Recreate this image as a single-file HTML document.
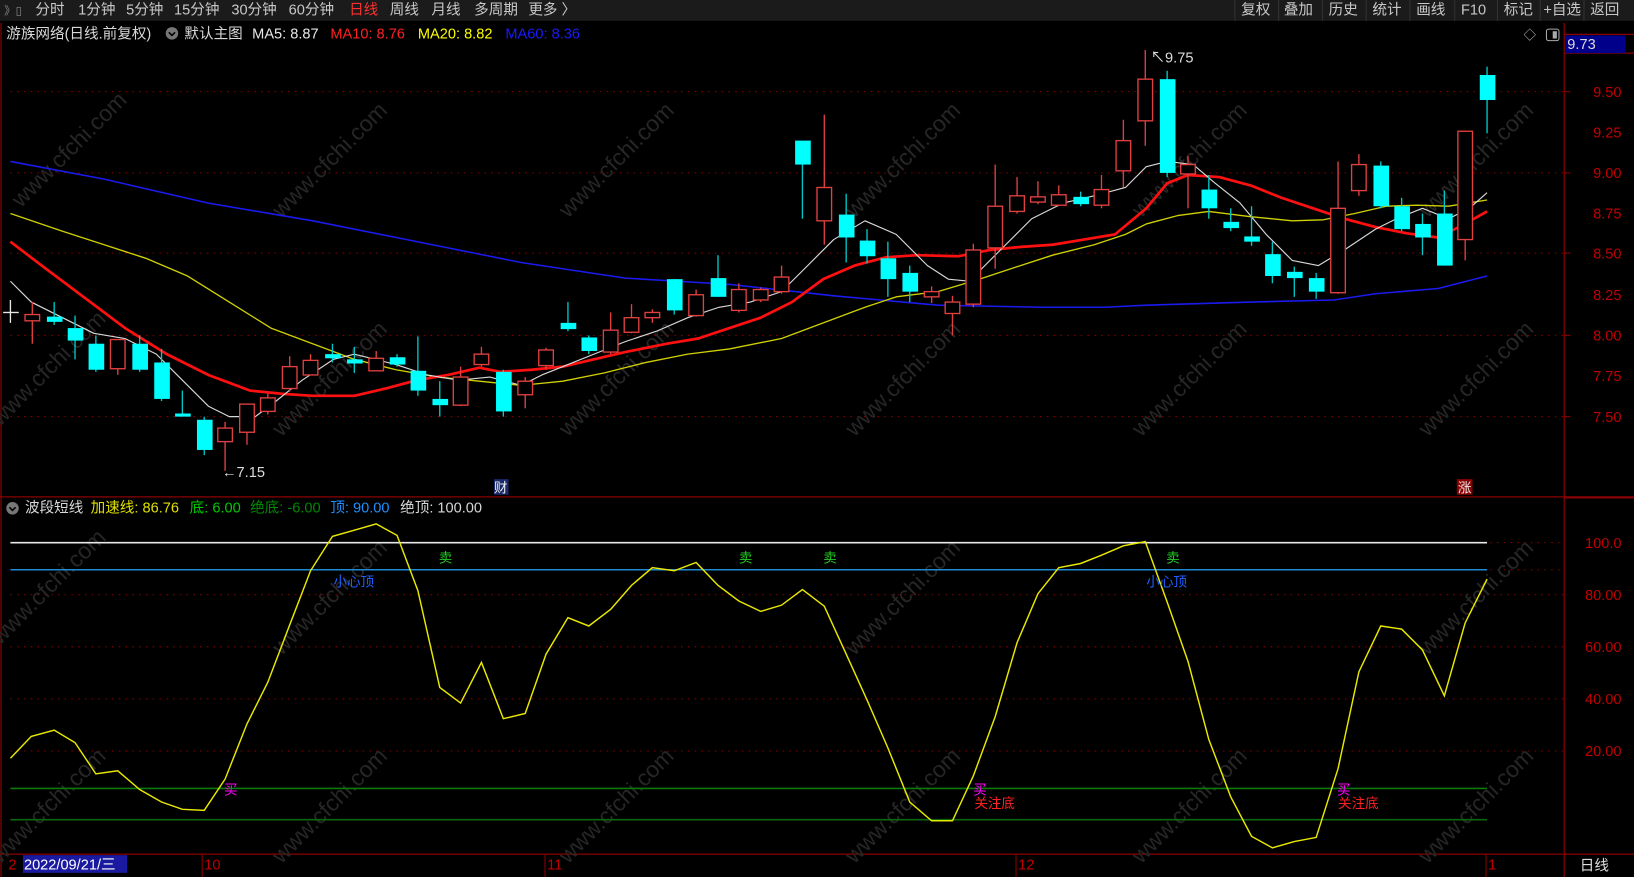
<!DOCTYPE html>
<html><head><meta charset="utf-8"><style>
html,body{margin:0;padding:0;background:#000;width:1634px;height:877px;overflow:hidden}
svg{display:block}
text{font-family:"Liberation Sans","Noto Sans CJK SC",sans-serif}
</style></head><body>
<svg width="1634" height="877" viewBox="0 0 1568 842" preserveAspectRatio="none" xmlns="http://www.w3.org/2000/svg">
<rect width="1568" height="842" fill="#000"/>
<!-- top bar -->
<rect x="0" y="0" width="1568" height="20" fill="#1b1b1b"/>
<g font-size="14" fill="#c8c8c8">
<text x="4" y="14" font-size="11" fill="#888">》▯</text>
<text x="34" y="14">分时</text><text x="75" y="14">1分钟</text><text x="121" y="14">5分钟</text><text x="167" y="14">15分钟</text><text x="222" y="14">30分钟</text><text x="277" y="14">60分钟</text>
<text x="335" y="14" fill="#ff3030">日线</text><text x="374" y="14">周线</text><text x="414" y="14">月线</text><text x="455" y="14">多周期</text><text x="507" y="14">更多 〉</text>
<text x="1191" y="14">复权</text><text x="1232" y="14">叠加</text><text x="1275" y="14">历史</text><text x="1317" y="14">统计</text><text x="1359" y="14">画线</text><text x="1402" y="14">F10</text><text x="1443" y="14">标记</text><text x="1481" y="14">+自选</text><text x="1526" y="14">返回</text>
</g>
<g stroke="#333" stroke-width="1">
<line x1="1185" y1="0" x2="1185" y2="20"/><line x1="1227" y1="0" x2="1227" y2="20"/><line x1="1269" y1="0" x2="1269" y2="20"/><line x1="1311" y1="0" x2="1311" y2="20"/><line x1="1353" y1="0" x2="1353" y2="20"/><line x1="1396" y1="0" x2="1396" y2="20"/><line x1="1437" y1="0" x2="1437" y2="20"/><line x1="1478" y1="0" x2="1478" y2="20"/><line x1="1520" y1="0" x2="1520" y2="20"/>
</g>
<!-- frame lines -->
<g stroke="#8b0000" stroke-width="1.2" fill="none">
<line x1="1501" y1="22" x2="1501" y2="842"/>
<line x1="0" y1="477" x2="1568" y2="477"/>
<line x1="0" y1="820" x2="1568" y2="820"/>
<line x1="1501" y1="33" x2="1568" y2="33"/>
<line x1="1501" y1="51" x2="1568" y2="51"/>
<line x1="1501" y1="478" x2="1568" y2="478"/>
<line x1="1" y1="22" x2="1" y2="842"/>
</g>
<!-- price grid -->
<g stroke="#8b0000" stroke-width="1" stroke-dasharray="1.5,5">
<line x1="10" y1="88" x2="1500" y2="88"/><line x1="10" y1="166" x2="1500" y2="166"/><line x1="10" y1="243" x2="1500" y2="243"/><line x1="10" y1="322" x2="1500" y2="322"/><line x1="10" y1="400" x2="1500" y2="400"/>
<line x1="10" y1="571" x2="1500" y2="571"/><line x1="10" y1="621" x2="1500" y2="621"/><line x1="10" y1="671" x2="1500" y2="671"/><line x1="10" y1="721" x2="1500" y2="721"/><line x1="1430" y1="521" x2="1500" y2="521"/><line x1="1430" y1="547" x2="1500" y2="547"/>
</g>
<g font-size="14" fill="#c00000" text-anchor="end">
<text x="1556" y="93">9.50</text><text x="1556" y="132">9.25</text><text x="1556" y="171">9.00</text><text x="1556" y="210">8.75</text><text x="1556" y="248">8.50</text><text x="1556" y="288">8.25</text><text x="1556" y="327">8.00</text><text x="1556" y="366">7.75</text><text x="1556" y="405">7.50</text>
<text x="1556" y="526">100.0</text><text x="1556" y="576">80.00</text><text x="1556" y="626">60.00</text><text x="1556" y="676">40.00</text><text x="1556" y="726">20.00</text>
</g>
<g stroke="#8b0000"><line x1="1501" y1="88" x2="1507" y2="88"/><line x1="1501" y1="166" x2="1507" y2="166"/><line x1="1501" y1="243" x2="1507" y2="243"/><line x1="1501" y1="322" x2="1507" y2="322"/><line x1="1501" y1="400" x2="1507" y2="400"/></g>
<rect x="1502" y="34" width="58" height="17" fill="#00008b"/>
<text x="1504" y="47" font-size="14" fill="#ddd">9.73</text>
<text x="1462" y="38" font-size="12" fill="#bbb">◇</text>
<rect x="1484" y="28" width="12" height="11" rx="2" fill="none" stroke="#aaa"/><rect x="1490" y="30" width="4" height="7" fill="#aaa"/>
<!-- watermarks -->
<g font-size="22" fill="#262626" font-family="Liberation Sans">
<text transform="translate(20,200) rotate(-45)">www.cfchi.com</text>
<text transform="translate(270,210) rotate(-45)">www.cfchi.com</text>
<text transform="translate(545,210) rotate(-45)">www.cfchi.com</text>
<text transform="translate(820,210) rotate(-45)">www.cfchi.com</text>
<text transform="translate(1095,210) rotate(-45)">www.cfchi.com</text>
<text transform="translate(1370,210) rotate(-45)">www.cfchi.com</text>
<text transform="translate(0,410) rotate(-45)">www.cfchi.com</text>
<text transform="translate(270,420) rotate(-45)">www.cfchi.com</text>
<text transform="translate(545,420) rotate(-45)">www.cfchi.com</text>
<text transform="translate(820,420) rotate(-45)">www.cfchi.com</text>
<text transform="translate(1095,420) rotate(-45)">www.cfchi.com</text>
<text transform="translate(1370,420) rotate(-45)">www.cfchi.com</text>
<text transform="translate(0,620) rotate(-45)">www.cfchi.com</text>
<text transform="translate(270,630) rotate(-45)">www.cfchi.com</text>
<text transform="translate(820,630) rotate(-45)">www.cfchi.com</text>
<text transform="translate(1370,630) rotate(-45)">www.cfchi.com</text>
<text transform="translate(0,830) rotate(-45)">www.cfchi.com</text>
<text transform="translate(270,830) rotate(-45)">www.cfchi.com</text>
<text transform="translate(545,830) rotate(-45)">www.cfchi.com</text>
<text transform="translate(820,830) rotate(-45)">www.cfchi.com</text>
<text transform="translate(1095,830) rotate(-45)">www.cfchi.com</text>
<text transform="translate(1370,830) rotate(-45)">www.cfchi.com</text>
</g>
<!-- header -->
<g font-size="14">
<text x="6" y="37" fill="#d8d8d8">游族网络(日线.前复权)</text>
<circle cx="165" cy="32" r="6" fill="#777"/><path d="M162 31 L165 34 L168 31" stroke="#000" stroke-width="1.5" fill="none"/>
<text x="177" y="37" fill="#d8d8d8">默认主图</text>
<text x="242" y="37" fill="#e8e8e8">MA5: 8.87</text>
<text x="317" y="37" fill="#ff2020">MA10: 8.76</text>
<text x="401" y="37" fill="#ffff00">MA20: 8.82</text>
<text x="485" y="37" fill="#1a1aff">MA60: 8.36</text>
</g>
<!-- MAs -->
<g fill="none" stroke-linejoin="round">
<polyline stroke="#1a1aee" stroke-width="1.5" points="10,155 100,172 200,195 300,212 400,232 500,252 600,267 700,273 800,284 900,293 1000,295 1060,295 1100,293 1200,290 1280,288 1320,282 1380,277 1427,265"/>
<polyline stroke="#d0d000" stroke-width="1.3" points="10,205 60,222 100,235 140,248 180,265 220,290 260,315 300,330 340,345 380,355 420,362 460,366 500,370 540,366 580,358 620,348 660,340 700,335 750,325 790,310 830,295 860,285 900,280 940,268 970,258 1010,245 1050,235 1080,225 1100,215 1130,207 1160,203 1200,208 1240,212 1270,211 1300,205 1330,198 1360,197 1390,198 1427,192"/>
<polyline stroke="#ff1010" stroke-width="2.6" points="10,232 40,255 80,285 120,315 160,340 200,360 240,375 270,378 300,380 340,380 370,373 400,365 430,360 460,353 480,357 510,355 540,352 570,345 600,338 640,330 670,325 700,315 730,305 760,290 790,268 820,255 850,247 880,245 920,246 950,240 980,237 1010,235 1040,230 1070,225 1100,200 1120,176 1140,168 1170,170 1200,178 1230,190 1260,200 1290,210 1320,218 1350,224 1380,228 1400,218 1427,203"/>
<polyline stroke="#d8d8d8" stroke-width="1.1" points="10,270 30,290 60,305 90,320 120,325 150,340 175,365 200,390 220,400 245,400 265,385 290,365 320,345 340,340 360,345 380,350 410,360 440,365 470,362 500,370 520,360 545,350 570,340 600,328 630,318 660,305 690,295 720,290 750,280 775,255 800,230 830,212 860,225 890,255 910,268 930,270 960,240 990,210 1020,195 1050,188 1080,180 1100,160 1120,155 1145,158 1165,175 1190,195 1215,225 1240,250 1265,255 1290,240 1320,220 1340,210 1365,200 1390,210 1410,200 1427,185"/>
</g>
<!-- candles -->
<g stroke="#e04040" stroke-width="1.3" fill="#000">
<line x1="31" y1="290" x2="31" y2="330"/><rect x="24" y="302" width="14" height="6"/>
<line x1="113" y1="326" x2="113" y2="360"/><rect x="106" y="326" width="14" height="28"/>
<line x1="216" y1="405" x2="216" y2="452"/><rect x="209" y="411" width="14" height="13"/>
<line x1="237" y1="388" x2="237" y2="427"/><rect x="230" y="388" width="14" height="27"/>
<line x1="257" y1="378" x2="257" y2="398"/><rect x="250" y="382" width="14" height="13"/>
<line x1="278" y1="342" x2="278" y2="376"/><rect x="271" y="352" width="14" height="21"/>
<line x1="298" y1="340" x2="298" y2="360"/><rect x="291" y="346" width="14" height="14"/>
<line x1="361" y1="337" x2="361" y2="356"/><rect x="354" y="344" width="14" height="12"/>
<line x1="442" y1="352" x2="442" y2="390"/><rect x="435" y="362" width="14" height="27"/>
<line x1="462" y1="333" x2="462" y2="352"/><rect x="455" y="340" width="14" height="10"/>
<line x1="504" y1="362" x2="504" y2="392"/><rect x="497" y="366" width="14" height="13"/>
<line x1="524" y1="334" x2="524" y2="355"/><rect x="517" y="336" width="14" height="15"/>
<line x1="586" y1="300" x2="586" y2="340"/><rect x="579" y="317" width="14" height="21"/>
<line x1="606" y1="292" x2="606" y2="320"/><rect x="599" y="305" width="14" height="14"/>
<line x1="626" y1="297" x2="626" y2="310"/><rect x="619" y="300" width="14" height="5"/>
<line x1="668" y1="278" x2="668" y2="304"/><rect x="661" y="283" width="14" height="20"/>
<line x1="709" y1="272" x2="709" y2="300"/><rect x="702" y="278" width="14" height="20"/>
<line x1="730" y1="276" x2="730" y2="290"/><rect x="723" y="278" width="14" height="10"/>
<line x1="750" y1="255" x2="750" y2="282"/><rect x="743" y="266" width="14" height="14"/>
<line x1="791" y1="110" x2="791" y2="235"/><rect x="784" y="180" width="14" height="32"/>
<line x1="894" y1="275" x2="894" y2="291"/><rect x="887" y="280" width="14" height="5"/>
<line x1="914" y1="284" x2="914" y2="322"/><rect x="907" y="290" width="14" height="11"/>
<line x1="934" y1="234" x2="934" y2="295"/><rect x="927" y="240" width="14" height="52"/>
<line x1="955" y1="158" x2="955" y2="258"/><rect x="948" y="198" width="14" height="40"/>
<line x1="976" y1="170" x2="976" y2="205"/><rect x="969" y="188" width="14" height="15"/>
<line x1="996" y1="174" x2="996" y2="196"/><rect x="989" y="189" width="14" height="5"/>
<line x1="1016" y1="178" x2="1016" y2="198"/><rect x="1009" y="187" width="14" height="10"/>
<line x1="1057" y1="168" x2="1057" y2="200"/><rect x="1050" y="182" width="14" height="15"/>
<line x1="1078" y1="115" x2="1078" y2="180"/><rect x="1071" y="135" width="14" height="29"/>
<line x1="1099" y1="48" x2="1099" y2="140"/><rect x="1092" y="76" width="14" height="40"/>
<line x1="1140" y1="150" x2="1140" y2="200"/><rect x="1133" y="158" width="14" height="9"/>
<line x1="1284" y1="155" x2="1284" y2="282"/><rect x="1277" y="200" width="14" height="81"/>
<line x1="1304" y1="148" x2="1304" y2="188"/><rect x="1297" y="158" width="14" height="25"/>
<line x1="1406" y1="126" x2="1406" y2="250"/><rect x="1399" y="126" width="14" height="104"/>
</g>
<g stroke="#00c8c8" stroke-width="1.3">
<line x1="52" y1="290" x2="52" y2="312"/><line x1="72" y1="303" x2="72" y2="345"/><line x1="92" y1="322" x2="92" y2="357"/><line x1="134" y1="322" x2="134" y2="357"/><line x1="155" y1="335" x2="155" y2="385"/><line x1="175" y1="375" x2="175" y2="400"/><line x1="196" y1="400" x2="196" y2="437"/><line x1="319" y1="330" x2="319" y2="348"/><line x1="340" y1="333" x2="340" y2="358"/><line x1="381" y1="340" x2="381" y2="352"/><line x1="401" y1="323" x2="401" y2="380"/><line x1="422" y1="366" x2="422" y2="400"/><line x1="483" y1="355" x2="483" y2="400"/><line x1="545" y1="290" x2="545" y2="318"/><line x1="565" y1="322" x2="565" y2="340"/><line x1="647" y1="268" x2="647" y2="302"/><line x1="689" y1="245" x2="689" y2="285"/><line x1="770" y1="135" x2="770" y2="210"/><line x1="812" y1="186" x2="812" y2="252"/><line x1="832" y1="220" x2="832" y2="253"/><line x1="852" y1="232" x2="852" y2="285"/><line x1="873" y1="255" x2="873" y2="290"/><line x1="1037" y1="184" x2="1037" y2="198"/><line x1="1120" y1="68" x2="1120" y2="170"/><line x1="1160" y1="168" x2="1160" y2="210"/><line x1="1181" y1="200" x2="1181" y2="222"/><line x1="1201" y1="198" x2="1201" y2="236"/><line x1="1221" y1="232" x2="1221" y2="272"/><line x1="1242" y1="256" x2="1242" y2="285"/><line x1="1263" y1="262" x2="1263" y2="287"/><line x1="1325" y1="155" x2="1325" y2="200"/><line x1="1345" y1="190" x2="1345" y2="222"/><line x1="1365" y1="205" x2="1365" y2="245"/><line x1="1386" y1="183" x2="1386" y2="255"/><line x1="1427" y1="64" x2="1427" y2="128"/>
</g>
<g fill="#00ffff">
<rect x="45" y="304" width="15" height="5"/><rect x="65" y="315" width="15" height="12"/><rect x="85" y="330" width="15" height="25"/><rect x="127" y="330" width="15" height="25"/><rect x="148" y="348" width="15" height="35"/><rect x="168" y="397" width="15" height="3"/><rect x="189" y="403" width="15" height="29"/><rect x="312" y="340" width="15" height="4"/><rect x="333" y="345" width="15" height="4"/><rect x="374" y="343" width="15" height="7"/><rect x="394" y="356" width="15" height="19"/><rect x="415" y="383" width="15" height="6"/><rect x="476" y="357" width="15" height="38"/><rect x="538" y="310" width="15" height="6"/><rect x="558" y="324" width="15" height="13"/><rect x="640" y="268" width="15" height="30"/><rect x="682" y="267" width="15" height="18"/><rect x="763" y="135" width="15" height="23"/><rect x="805" y="206" width="15" height="22"/><rect x="825" y="231" width="15" height="15"/><rect x="845" y="248" width="15" height="20"/><rect x="866" y="262" width="15" height="18"/><rect x="1030" y="189" width="15" height="7"/><rect x="1113" y="76" width="15" height="90"/><rect x="1153" y="182" width="15" height="18"/><rect x="1174" y="213" width="15" height="6"/><rect x="1194" y="227" width="15" height="5"/><rect x="1214" y="244" width="15" height="21"/><rect x="1235" y="261" width="15" height="6"/><rect x="1256" y="267" width="15" height="13"/><rect x="1318" y="159" width="15" height="39"/><rect x="1338" y="198" width="15" height="22"/><rect x="1358" y="215" width="15" height="13"/><rect x="1379" y="205" width="15" height="50"/><rect x="1420" y="72" width="15" height="24"/>
</g>
<g stroke="#e8e8e8" stroke-width="1.3"><line x1="10" y1="288" x2="10" y2="310"/><line x1="3" y1="300" x2="18" y2="300"/></g>
<text x="1104" y="60" font-size="14" fill="#ddd">↖9.75</text>
<text x="213" y="458" font-size="14" fill="#ddd">←7.15</text>
<rect x="474" y="460" width="14" height="15" fill="#1a2a6a"/><text x="474" y="473" font-size="13" fill="#eee">财</text>
<rect x="1398" y="460" width="15" height="15" fill="#8b0000"/><text x="1399" y="473" font-size="13" fill="#eee">涨</text>
<!-- lower panel header -->
<g font-size="14">
<circle cx="12" cy="488" r="6" fill="#777"/><path d="M9 487 L12 490 L15 487" stroke="#000" stroke-width="1.5" fill="none"/>
<text x="24" y="492" fill="#d8d8d8">波段短线</text>
<text x="87" y="492" fill="#e0e000">加速线: 86.76</text>
<text x="182" y="492" fill="#00cc00">底: 6.00</text>
<text x="240" y="492" fill="#008800">绝底: -6.00</text>
<text x="317" y="492" fill="#1e90ff">顶: 90.00</text>
<text x="384" y="492" fill="#d8d8d8">绝顶: 100.00</text>
</g>
<g stroke-width="1.5">
<line x1="10" y1="521" x2="1427" y2="521" stroke="#e8e8e8"/>
<line x1="10" y1="547" x2="1427" y2="547" stroke="#1e8ad0"/>
<line x1="10" y1="757" x2="1427" y2="757" stroke="#0a7a0a"/>
<line x1="10" y1="787" x2="1427" y2="787" stroke="#0a6a0a"/>
</g>
<polyline fill="none" stroke="#e8e800" stroke-width="1.4" points="10,728 30,707 52,701 72,713 92,743 113,740 134,758 155,770 175,777 196,778 216,748 237,695 257,655 278,600 298,548 319,515 340,509 361,503 381,514 401,567 422,660 442,675 462,636 483,690 504,685 524,628 545,593 565,601 586,585 606,562 626,545 647,548 668,540 689,562 709,577 730,587 750,581 770,566 791,582 812,628 832,672 852,718 873,770 894,788 914,788 934,745 955,688 976,617 996,570 1016,545 1037,541 1057,533 1078,524 1099,520 1120,578 1140,635 1160,710 1181,765 1201,803 1221,814 1242,808 1263,804 1284,738 1304,645 1325,601 1345,604 1365,624 1386,668 1406,598 1427,556"/>
<g font-size="13">
<text x="421" y="540" fill="#22cc22">卖</text><text x="709" y="540" fill="#22cc22">卖</text><text x="790" y="540" fill="#22cc22">卖</text><text x="1119" y="540" fill="#22cc22">卖</text>
<text x="320" y="563" fill="#2060ff">小心顶</text><text x="1100" y="563" fill="#2060ff">小心顶</text>
<text x="215" y="763" fill="#ff00ff">买</text><text x="934" y="763" fill="#ff00ff">买</text><text x="1283" y="763" fill="#ff00ff">买</text>
<text x="935" y="776" fill="#ff2020">关注底</text><text x="1284" y="776" fill="#ff2020">关注底</text>
</g>
<!-- bottom axis -->
<g stroke="#8b0000"><line x1="194" y1="820" x2="194" y2="842"/><line x1="523" y1="820" x2="523" y2="842"/><line x1="975" y1="820" x2="975" y2="842"/><line x1="1426" y1="820" x2="1426" y2="842"/></g>
<g font-size="14" fill="#c00000"><text x="8" y="835">2</text><text x="196" y="835">10</text><text x="525" y="835">11</text><text x="977" y="835">12</text><text x="1428" y="835">1</text></g>
<rect x="22" y="821" width="100" height="17" fill="#1a1aa0"/>
<text x="23" y="835" font-size="14" fill="#fff">2022/09/21/三</text>
<text x="1516" y="836" font-size="14" fill="#ddd">日线</text>
</svg>
</body></html>
